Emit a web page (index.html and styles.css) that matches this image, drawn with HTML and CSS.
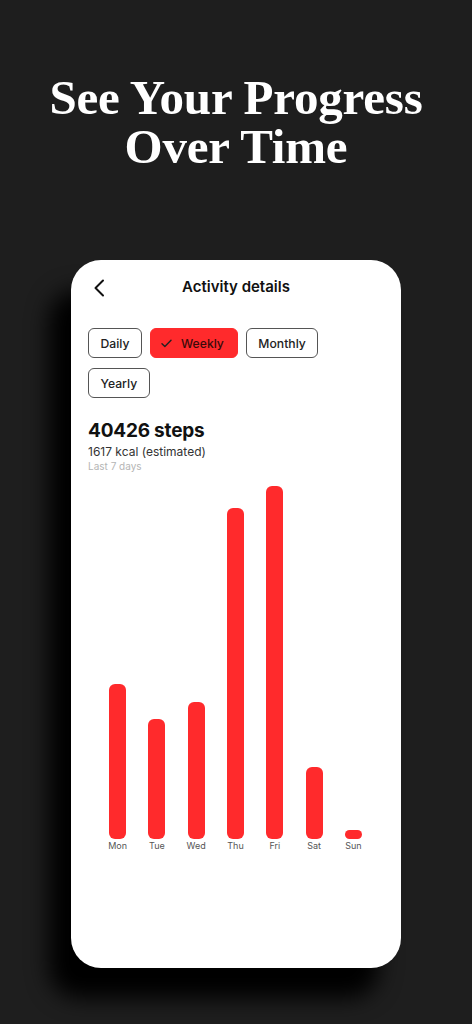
FILE: index.html
```html
<!DOCTYPE html>
<html lang="en">
<head>
<meta charset="UTF-8">
<meta name="viewport" content="width=device-width,initial-scale=1">
<title>See Your Progress Over Time</title>
<link rel="stylesheet" href="styles.css">
</head>
<body>
    <h1 class="promo-title">See Your Progress<br>Over Time</h1>

    <div class="phone">
        <!-- top bar -->
        <div class="nav">
            <span class="nav-back">
                <svg viewBox="0 0 12 18"><path d="M10 1.5 2.5 9 10 16.5"/></svg>
            </span>
            <div class="nav-title">Activity details</div>
        </div>

        <!-- period chips -->
        <div class="chips">
            <span class="chip">Daily</span>
            <span class="chip active">
                <svg viewBox="0 0 12 10"><path d="M1 5.2 4.2 8.3 11 1.5"/></svg>
                Weekly
            </span>
            <span class="chip">Monthly</span>
            <span class="chip">Yearly</span>
        </div>

        <div class="summary">
            <div class="summary-steps">40426 steps</div>
            <div class="summary-kcal">1617 kcal (estimated)</div>
            <div class="summary-range">Last 7 days</div>
        </div>

        <!-- bar chart -->
        <div class="chart">
            <div class="day"><div class="bar" style="height:155px"></div><span>Mon</span></div>
            <div class="day"><div class="bar" style="height:120px"></div><span>Tue</span></div>
            <div class="day"><div class="bar" style="height:137px"></div><span>Wed</span></div>
            <div class="day"><div class="bar" style="height:331px"></div><span>Thu</span></div>
            <div class="day"><div class="bar" style="height:353px"></div><span>Fri</span></div>
            <div class="day"><div class="bar" style="height:72px"></div><span>Sat</span></div>
            <div class="day"><div class="bar" style="height:9px"></div><span>Sun</span></div>
        </div>
    </div>
</body>
</html>
```

FILE: styles.css
```css
:root{
    --bg:#1e1e1e;
    --red:#ff2a2c;
    --ink:#111;
}

*{margin:0;padding:0;box-sizing:border-box}
html{background:var(--bg)}
body{
    min-height:1024px;
    padding-bottom:60px;
    font-family:Inter,"Noto Sans",sans-serif;
    color:var(--ink);
}

/* heading ------------- */
.promo-title{
    font-family:"Liberation Serif","DejaVu Serif",serif;
    font-weight:700;
    font-size:49px;
    line-height:49px;
    color:#fff;
    text-align:center;
    letter-spacing:-.2px;
    padding-top:73px;
}

/* phone card ---------- */
.phone{
    width:330px;
    height:708px;
    margin:89px 0 0 71px;
    background:#fff;
    border-radius:30px;
    box-shadow:-22px 30px 22px #000;
    padding:0 17px;
    display:flex;
    flex-direction:column;
}

.nav{
    position:relative;
    height:54px;
    padding-top:17px;
    text-align:center;
}
.nav-back{
    position:absolute;
    left:5px;
    top:19px;
    width:12px;
    height:18px;
}
.nav-back svg{
    width:12px;height:18px;
    fill:none;stroke:#111;stroke-width:2;
    stroke-linecap:round;stroke-linejoin:round;
}
.nav-title{
    font-size:15px;
    font-weight:600;
    line-height:20px;
}

.chips{
    display:flex;
    flex-wrap:wrap;
    gap:10px 8px;
    margin-top:14px;
}
.chip{
    display:flex;
    align-items:center;
    gap:9px;
    height:30px;
    padding:0 11.5px;
    border:1.5px solid #555;
    border-radius:6px;
    font-size:12.2px;
    font-weight:500;
    color:#222;
}
.chip.active{
    background:var(--red);
    border-color:var(--red);
    color:#3b0a0a;
    padding:0 13px 0 10px;
}
.chip.active svg{
    width:11px;height:9px;
    fill:none;stroke:#222;stroke-width:1.6;
    stroke-linecap:round;stroke-linejoin:round;
}

.summary{margin-top:21px}
.summary-steps{
    font-size:19px;
    font-weight:700;
    line-height:23px;
    letter-spacing:-.2px;
}
.summary-kcal{
    font-size:12px;
    line-height:15px;
    color:#333;
    margin-top:2px;
}
.summary-range{
    font-size:10px;
    line-height:14px;
    color:#b5b5b5;
}

.chart{
    display:grid;
    grid-template-columns:repeat(7,1fr);
    align-items:end;
    height:378px;
    margin:0 11px 0 10px;
}
.day{
    display:flex;
    flex-direction:column;
    align-items:center;
}
.bar{
    width:17px;
    background:var(--red);
    border-radius:6px;
}
.day span{
    font-size:9px;
    line-height:11px;
    margin-top:1px;
    color:#555;
}
```
